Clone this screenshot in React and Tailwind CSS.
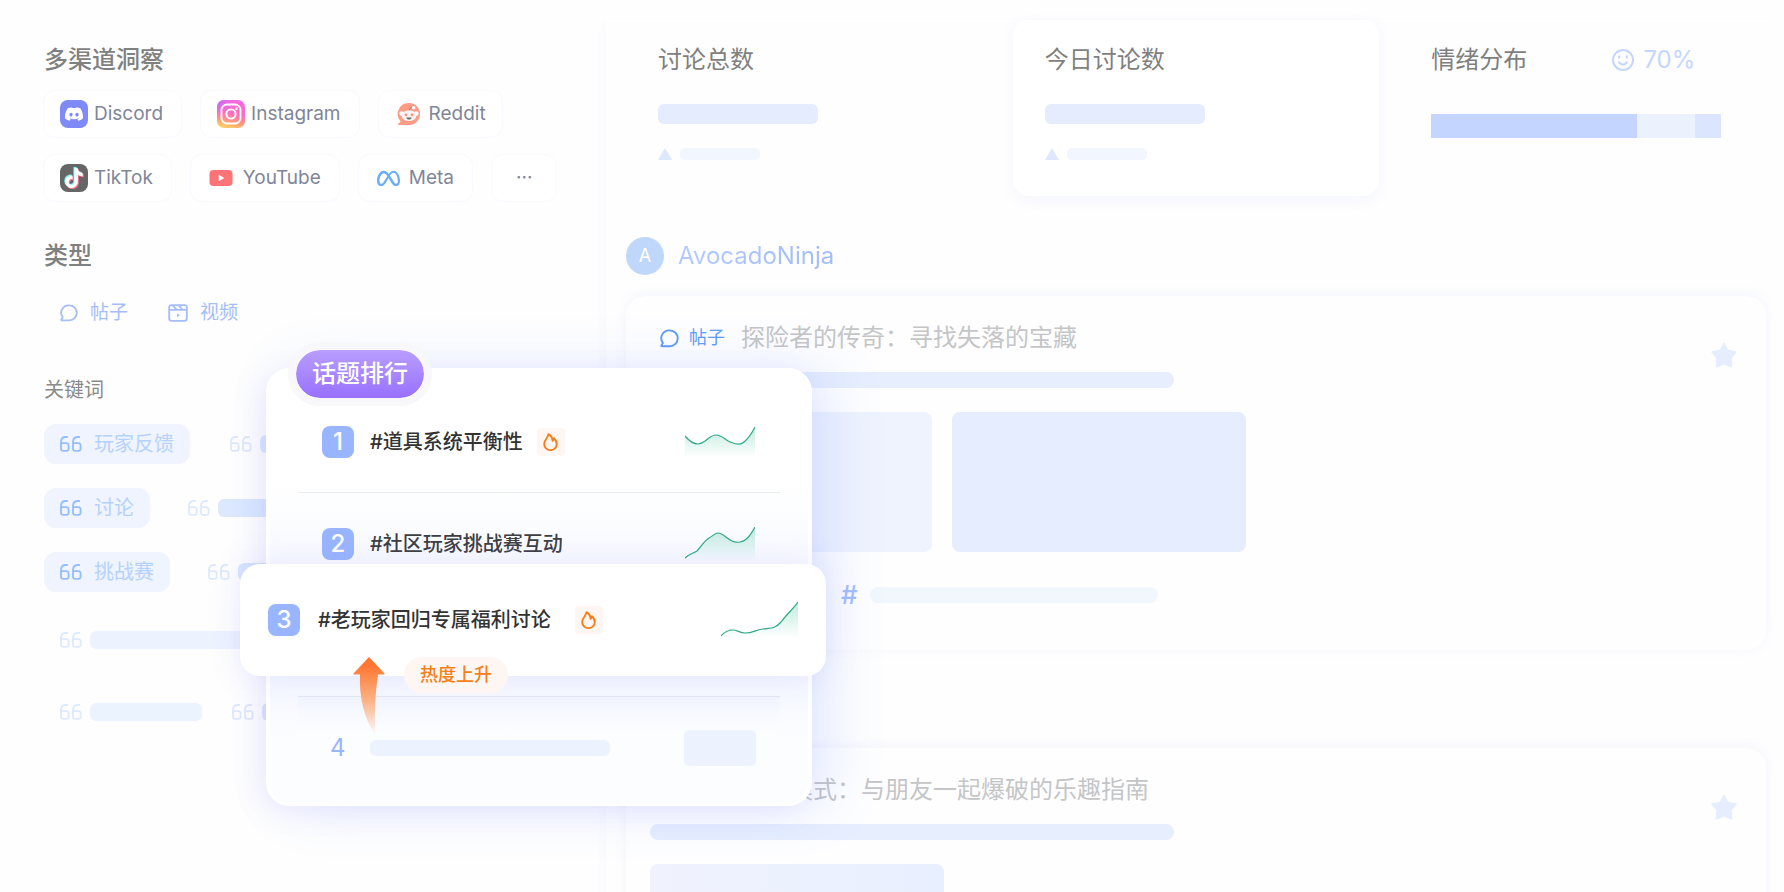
import React from "react";
import { SiDiscord, SiTiktok, SiMeta } from "react-icons/si";

/* ---------- icons ---------- */

function DiscordLogo() {
  return (
    <span className="flex size-7 items-center justify-center rounded-lg bg-[#7f89f7]">
      <SiDiscord className="size-[18px] text-white" />
    </span>
  );
}

function InstagramLogo() {
  return (
    <svg viewBox="0 0 28 28" className="size-7">
      <defs>
        <linearGradient id="ig-base" x1="0.6" y1="0" x2="0.35" y2="1">
          <stop offset="0" stopColor="#f56be0" />
          <stop offset="0.45" stopColor="#ff6cc0" />
          <stop offset="0.75" stopColor="#ff9a80" />
          <stop offset="1" stopColor="#ffd25e" />
        </linearGradient>
        <radialGradient id="ig-corner" cx="0" cy="0" r="0.7">
          <stop offset="0" stopColor="#b06cff" />
          <stop offset="1" stopColor="#f56be0" stopOpacity="0" />
        </radialGradient>
      </defs>
      <rect width="28" height="28" rx="7" fill="url(#ig-base)" />
      <rect width="28" height="28" rx="7" fill="url(#ig-corner)" />
      <rect x="4.5" y="4.5" width="19" height="19" rx="5.5" fill="none" stroke="#fff" strokeWidth="1.8" />
      <circle cx="14" cy="14" r="4.6" fill="none" stroke="#fff" strokeWidth="1.9" />
      <circle cx="19.4" cy="8.7" r="1.3" fill="#fff" />
    </svg>
  );
}

function RedditLogo() {
  return (
    <svg viewBox="0 0 24 24" className="size-6">
      <path d="M12 1a11 11 0 1 1 0 22H1.6c-.5 0-.7-.6-.4-1l2.4-2.6A11 11 0 0 1 12 1z" fill="#ff9a85" />
      <path d="M12.3 8.2c.3-2 1.4-3 3.4-2.8" fill="none" stroke="#a5665a" strokeWidth="0.8" />
      <circle cx="16.6" cy="5.8" r="1.8" fill="#fff" />
      <circle cx="4.7" cy="11.6" r="2.3" fill="#fff" />
      <circle cx="19.3" cy="11.6" r="2.3" fill="#fff" />
      <ellipse cx="12" cy="13.6" rx="7.4" ry="5.4" fill="#f4f4f6" />
      <circle cx="9" cy="12.8" r="1.4" fill="#ff8f72" />
      <circle cx="15" cy="12.8" r="1.4" fill="#ff8f72" />
      <path d="M9.3 15.6h5.4c-.4 1.4-1.4 2-2.7 2s-2.3-.6-2.7-2z" fill="#6b6b6b" />
    </svg>
  );
}

function TikTokLogo() {
  return (
    <span className="grid size-7 place-items-center rounded-lg bg-[#666]">
      <SiTiktok className="col-start-1 row-start-1 mr-[2px] mb-[2px] size-5 text-[#7cf5f1]" />
      <SiTiktok className="col-start-1 row-start-1 mt-[1px] ml-[2px] size-5 text-[#ff7590]" />
      <SiTiktok className="col-start-1 row-start-1 size-5 text-white" />
    </span>
  );
}

function YouTubeLogo() {
  return (
    <svg viewBox="0 0 24 24" className="size-6">
      <rect x="0.5" y="4" width="23" height="16" rx="4" fill="#ff7377" />
      <path d="M9.7 8.8v6.4l5.6-3.2z" fill="#fff" />
    </svg>
  );
}

function MetaLogo() {
  return (
    <span className="flex size-6 items-center justify-center">
      <SiMeta className="size-[23px] text-[#69adfc]" />
    </span>
  );
}

function ChatIcon({ className }) {
  return (
    <svg viewBox="0 0 20 20" fill="none" stroke="currentColor" strokeWidth="2" strokeLinejoin="round" className={className}>
      <path d="M10.4 1.5a8.2 8.2 0 1 1 0 16.6H2c-.5 0-.8-.6-.5-1l1.6-2.4A8.2 8.2 0 0 1 10.4 1.5z" />
    </svg>
  );
}

function VideoIcon({ className }) {
  return (
    <svg viewBox="0 0 22 20" fill="none" stroke="currentColor" strokeWidth="2" strokeLinejoin="round" className={className}>
      <rect x="1.2" y="1.2" width="19.6" height="17.6" rx="2.6" />
      <path d="M1.5 6.6h19M5 1.4l4.8 5.2M11.5 1.4l4.8 5.2" />
      <path d="M9.8 10.4v4.4l3.4-2.2z" fill="currentColor" stroke="none" />
    </svg>
  );
}

function QuoteIcon({ className }) {
  const glyph = "M7.2 1H6C2.8 1 1 2.8 1 6v6.4C1 14 1.8 14.8 3.4 14.8h2.8c1.6 0 2.4-.8 2.4-2.4V9.6c0-1.6-.8-2.4-2.4-2.4H1.2";
  return (
    <svg viewBox="0 0 22 16" fill="none" stroke="currentColor" strokeWidth="1.8" strokeLinecap="round" className={className}>
      <path d={glyph} />
      <path d={glyph} transform="translate(12 0)" />
    </svg>
  );
}

function FlameTile() {
  return (
    <span className="flex size-7 items-center justify-center rounded-sm bg-[#fef6f2]">
      <svg viewBox="0 0 15 18" fill="none" stroke="#f97d16" strokeWidth="1.9" strokeLinejoin="round" className="h-[18px] w-[15px]">
        <path d="M5.4 1.2C5.6 4.8 1.2 6.4 1.2 11a6.2 6 0 0 0 12.6 0c0-2.4-1-4.2-2.8-5.8-.2 1-.6 1.8-1.4 2.6C9.4 5 8 2.6 5.4 1.2z" />
      </svg>
    </span>
  );
}

function SmileIcon() {
  return (
    <svg viewBox="0 0 24 24" fill="none" stroke="currentColor" strokeWidth="2" className="size-6">
      <circle cx="12" cy="12" r="10" />
      <path d="M8 14.2c1 1.6 2.3 2.3 4 2.3s3-.7 4-2.3" strokeLinecap="round" />
      <path d="M8.2 7.5v3M15.8 7.5v3" />
    </svg>
  );
}

function StarIcon() {
  return (
    <svg viewBox="0 0 26 26" className="size-[26px] text-[#e6edfe]" fill="currentColor" stroke="currentColor" strokeLinejoin="round" strokeWidth="1">
      <path d="M13 .8c1.2 2 2 4.8 3.6 7.2 2.4 1 5.800 1 8.800 1.800-1.400 2.600-4 4.400-5.200 7 0 2.600.8 5.600.6 8.400-2.600-.6-5-2.400-7.800-3.200-2.800.8-5.200 2.600-7.800 3.200-.2-2.800.6-5.800.6-8.400-1.200-2.600-3.800-4.400-5.200-7C3.600 9 7 9 9.400 8 11 5.600 11.800 2.800 13 .8z" />
    </svg>
  );
}

/* ---------- sidebar ---------- */

const channelRows = [
  [
    { name: "Discord", Logo: DiscordLogo, pad: "gap-1.5 pl-4 pr-[18px]" },
    { name: "Instagram", Logo: InstagramLogo, pad: "gap-1.5 pl-4 pr-[18px]" },
    { name: "Reddit", Logo: RedditLogo, pad: "gap-2 pl-[18px] pr-4" },
  ],
  [
    { name: "TikTok", Logo: TikTokLogo, pad: "gap-1.5 pl-4 pr-[18px]" },
    { name: "YouTube", Logo: YouTubeLogo, pad: "gap-2.5 pl-[18px] pr-[18px]" },
    { name: "Meta", Logo: MetaLogo, pad: "gap-2 pl-[18px] pr-[18px]" },
    { name: "···", Logo: null, pad: "px-6" },
  ],
];

function ChannelChip({ name, Logo, pad }) {
  return (
    <button type="button" className={`flex h-12 items-center rounded-xl border border-[#f9faff] bg-white text-[19px] leading-6 text-[#7f8699] ${pad}`}>
      {Logo && <Logo />}
      {name}
    </button>
  );
}

function KeywordChip({ label }) {
  return (
    <button type="button" className="flex h-10 items-center gap-3 rounded-xl bg-[#eff4ff] px-4 text-[20px] leading-6 text-[#b5d2fb]">
      <QuoteIcon className="h-4 w-[22px] text-[#95bdf8]" />
      {label}
    </button>
  );
}

function Placeholder({ bar }) {
  return (
    <div className="flex items-center gap-2">
      <QuoteIcon className="h-4 w-[22px] text-[#dde9fd]" />
      <div className={`h-[18px] rounded-md ${bar}`} />
    </div>
  );
}

function Sidebar() {
  return (
    <aside className="w-[600px] shrink-0 pl-11 pt-11">
      <h2 className="text-2xl font-medium leading-8 text-[#7f8080]">多渠道洞察</h2>
      <div className="-ml-px mt-[14px] flex flex-col gap-4">
        {channelRows.map((row, i) => (
          <div key={i} className="flex gap-[18px]">
            {row.map((c) => (
              <ChannelChip key={c.name} {...c} />
            ))}
          </div>
        ))}
      </div>

      <h2 className="mt-[38px] text-2xl font-medium leading-8 text-[#7f8080]">类型</h2>
      <div className="mt-[18px] flex gap-2 text-[19px] leading-6 text-[#a5bdf8]">
        <button type="button" className="flex h-[46px] items-center gap-3 px-4">
          <ChatIcon className="size-[18px]" />
          帖子
        </button>
        <button type="button" className="flex h-[46px] items-center gap-3 px-4">
          <VideoIcon className="h-[18px] w-5" />
          视频
        </button>
      </div>

      <h3 className="mt-[38px] text-[20px] leading-8 text-[#8a8a8a]">关键词</h3>
      <div className="mt-[18px] flex flex-col gap-6">
        <div className="flex h-10 items-center gap-10">
          <KeywordChip label="玩家反馈" />
          <Placeholder bar="w-24 bg-[#dbe7fe]" />
        </div>
        <div className="flex h-10 items-center gap-[38px]">
          <KeywordChip label="讨论" />
          <Placeholder bar="w-32 bg-[#dbe8fe]" />
        </div>
        <div className="flex h-10 items-center gap-[38px]">
          <KeywordChip label="挑战赛" />
          <Placeholder bar="w-24 bg-[#dbe8fe]" />
        </div>
        <div className="flex h-12 items-center pl-4">
          <Placeholder bar="w-56 bg-[#edf3fe]" />
        </div>
        <div className="flex h-12 items-center gap-[30px] pl-4">
          <Placeholder bar="w-28 bg-[#ebf3fe]" />
          <Placeholder bar="w-28 bg-[#dbe7fe]" />
        </div>
      </div>
    </aside>
  );
}

/* ---------- main ---------- */

function StatCard({ title, raised }) {
  return (
    <section className={`h-44 rounded-2xl px-8 pt-6 ${raised ? "bg-white shadow-[0_4px_16px_rgba(80,110,255,0.06)]" : ""}`}>
      <h2 className="text-2xl leading-8 text-[#7f7f7f]">{title}</h2>
      <div className="mt-7 h-5 w-40 rounded-md bg-[#e4ecfe]" />
      <div className="mt-6 flex items-center gap-2">
        <svg viewBox="0 0 14 12" className="h-3 w-[14px]" fill="#dde8fe">
          <path d="M7 0l7 12H0z" />
        </svg>
        <div className="h-3 w-20 rounded-[5px] bg-[#f2f6fe]" />
      </div>
    </section>
  );
}

function SentimentCard() {
  return (
    <section className="h-44 px-8 pt-6">
      <div className="flex w-[290px] items-center justify-between">
        <h2 className="text-2xl leading-8 text-[#7f7f7f]">情绪分布</h2>
        <span className="flex items-center gap-2 pr-[26px] text-2xl leading-8 text-[#c4d6ff]">
          <SmileIcon />
          70%
        </span>
      </div>
      <div className="mt-[38px] flex h-6 w-[290px]">
        <div className="grow-[71] bg-[#c4d6ff]" />
        <div className="grow-[20] bg-[#ecf1fe]" />
        <div className="grow-[9] bg-[#dbe5fe]" />
      </div>
    </section>
  );
}

function Post({ title, children }) {
  return (
    <article className="h-[354px] rounded-[20px] bg-[#fefeff] px-6 pt-[26px] shadow-[0_-2px_14px_rgba(80,110,230,0.06)]">
      <div className="flex h-[50px] items-start justify-between">
        <div className="flex items-center gap-4 pl-[10px]">
          <span className="flex items-center gap-2.5 text-[18px] leading-8 text-[#5f9df8]">
            <ChatIcon className="size-[19px]" />
            帖子
          </span>
          <h3 className="text-2xl leading-8 text-[#c4c5c7]">{title}</h3>
        </div>
        <button type="button" aria-label="收藏" className="mr-[5px] mt-5">
          <StarIcon />
        </button>
      </div>
      <div className="h-4 w-[524px] rounded-lg bg-[#e7eefe]" />
      {children}
    </article>
  );
}

function Main() {
  return (
    <main className="min-w-0 flex-1 pl-[6px] pt-5">
      <div className="h-full min-h-screen pl-5 pr-[18px] shadow-[-6px_0_10px_-4px_rgba(80,110,255,0.03)]">
        <div className="grid grid-cols-3 gap-5">
          <StatCard title="讨论总数" />
          <StatCard title="今日讨论数" raised />
          <SentimentCard />
        </div>

        <div className="mt-[41px] flex items-center gap-[14px]">
          <span className="flex size-[38px] items-center justify-center rounded-full bg-[#bfd7fb] text-lg text-white">A</span>
          <span className="bg-linear-to-r from-[#b5cafe] to-[#9fbafe] bg-clip-text text-2xl leading-8 text-transparent">AvocadoNinja</span>
        </div>

        <div className="mt-[21px] flex flex-col gap-[98px]">
          <Post title="探险者的传奇：寻找失落的宝藏">
            <div className="mt-6 flex gap-5">
              <div className="h-[140px] w-[282px] rounded-lg bg-[#eff3fe]" />
              <div className="h-[140px] w-[294px] rounded-lg bg-[#e6edfe]" />
            </div>
            <div className="ml-[191px] mt-[27px] flex items-center gap-3">
              <span className="text-[26px] font-medium leading-8 text-[#a6bffa]">#</span>
              <div className="h-4 w-72 rounded-lg bg-[#f2f7fe]" />
            </div>
          </Post>
          <Post title="爆破模式：与朋友一起爆破的乐趣指南">
            <div className="mt-6 h-[140px] w-[294px] rounded-lg bg-linear-to-r from-[#f0f3fe] to-[#e8effe]" />
          </Post>
        </div>
      </div>
    </main>
  );
}

/* ---------- topic ranking ---------- */

function Sparkline({ id, line, width, height, className }) {
  return (
    <svg viewBox={`0 0 ${width} ${height}`} className={className} fill="none">
      <defs>
        <linearGradient id={id} x1="0" y1="0" x2="0" y2="1">
          <stop offset="0" stopColor="#2fc08f" stopOpacity="0.3" />
          <stop offset="1" stopColor="#2fc08f" stopOpacity="0" />
        </linearGradient>
      </defs>
      <path d={`${line}V${height}H0z`} fill={`url(#${id})`} />
      <path d={line} stroke="#2fa885" strokeWidth="1.2" />
    </svg>
  );
}

function RankBadge({ n }) {
  return (
    <span className="flex size-8 shrink-0 items-center justify-center rounded-lg bg-[#9ab5ff] text-2xl font-medium leading-8 text-white">{n}</span>
  );
}

function TopicRanking() {
  return (
    <section className="absolute left-[266px] top-[368px] h-[438px] w-[546px] rounded-3xl border-4 border-white bg-linear-to-b from-white from-25% via-[#f2f5ff] via-65% to-[#fcfdff] to-85% px-7 shadow-[-8px_6px_28px_rgba(130,110,255,0.10),18px_0_56px_rgba(90,130,255,0.16)]">
      <h2 className="absolute -top-[30px] left-[18px] flex h-16 items-center rounded-full border-8 border-[#f8f8fa] bg-linear-to-b from-[#b99dff] to-[#9870ff] px-4 text-2xl font-medium leading-8 text-white [background-clip:padding-box]">
        话题排行
      </h2>
      <ol>
        <li className="flex h-[121px] items-center border-b border-[#ebecf0] pl-6 pt-5">
          <RankBadge n={1} />
          <span className="ml-4 mr-[14px] text-[20px] font-medium leading-8 text-[#333]">#道具系统平衡性</span>
          <FlameTile />
          <Sparkline
            id="spark-1"
            width={70}
            height={30}
            line="M0 9C5 15 9 17 13 17C20 17 24 8 31 8C37 8 40 13 45 15C52 18 56 18 59 15C64 11 67 6 70 0"
            className="ml-auto mr-[25px] h-[30px] w-[70px]"
          />
        </li>
        <li className="flex h-[102px] items-center pl-6">
          <RankBadge n={2} />
          <span className="ml-4 text-[20px] font-medium leading-8 text-[#3e3f43]">#社区玩家挑战赛互动</span>
          <Sparkline
            id="spark-2"
            width={70}
            height={34}
            line="M0 31C4 27 7 27 12 24C16 20 19 14 24 11C28 9 30 6 33 6C40 6 44 17 55 15C62 14 66 7 70 0"
            className="ml-auto mr-[25px] h-[34px] w-[70px]"
          />
        </li>
        <li aria-hidden="true" className="h-[102px] border-b border-[#e6e9f2]" />
        <li className="flex h-[88px] items-center bg-linear-to-b from-[#f2f6ff] to-[#fcfdff] to-40% pl-8 pt-[14px]">
          <span className="text-2xl leading-8 text-[#9ab4ff]">4</span>
          <div className="ml-6 h-4 w-60 rounded-md bg-[#ecf3ff]" />
          <div className="ml-auto mr-6 h-9 w-[72px] rounded-md bg-[#ecf3ff]" />
        </li>
      </ol>
    </section>
  );
}

function RisingTopic() {
  return (
    <section className="absolute left-[240px] top-[564px] h-28 w-[586px] rounded-[20px] bg-white px-7 shadow-[0_0_36px_rgba(100,110,255,0.13)]">
      <div className="flex h-28 items-center">
        <RankBadge n={3} />
        <span className="ml-[18px] mr-6 text-[20px] font-medium leading-8 text-[#333]">#老玩家回归专属福利讨论</span>
        <FlameTile />
        <Sparkline
          id="spark-3"
          width={77}
          height={36}
          line="M0 34C4 29 8 28 12 28C16 28 19 31 24 31C32 31 34 28 42 27C50 26 54 27 60 20C66 12 73 6 77 0"
          className="ml-auto h-9 w-[77px]"
        />
      </div>
      <svg viewBox="0 0 32 78" className="absolute left-[113px] top-[93px] h-[78px] w-8">
        <defs>
          <linearGradient id="rise" x1="0" y1="0" x2="0" y2="1">
            <stop offset="0.1" stopColor="#ff7630" />
            <stop offset="0.55" stopColor="#fbb183" />
            <stop offset="1" stopColor="#fbb183" stopOpacity="0" />
          </linearGradient>
        </defs>
        <path d="M16 0L31.5 16.5Q32 17.5 31 17.5H25C22 38 21 58 22.5 78C11 62 6 40 7 17.5H1Q0 17.5 .5 16.5z" fill="url(#rise)" />
      </svg>
      <span className="absolute left-[164px] top-[93px] flex h-9 items-center rounded-full bg-[#fef6f2] px-4 text-[18px] font-medium leading-6 text-[#f57f17]">
        热度上升
      </span>
    </section>
  );
}

export default function App() {
  return (
    <div className="relative flex h-screen overflow-hidden bg-[#fefefe] font-['Inter','Noto_Sans_CJK_SC',sans-serif]">
      <Sidebar />
      <Main />
      <TopicRanking />
      <RisingTopic />
    </div>
  );
}
